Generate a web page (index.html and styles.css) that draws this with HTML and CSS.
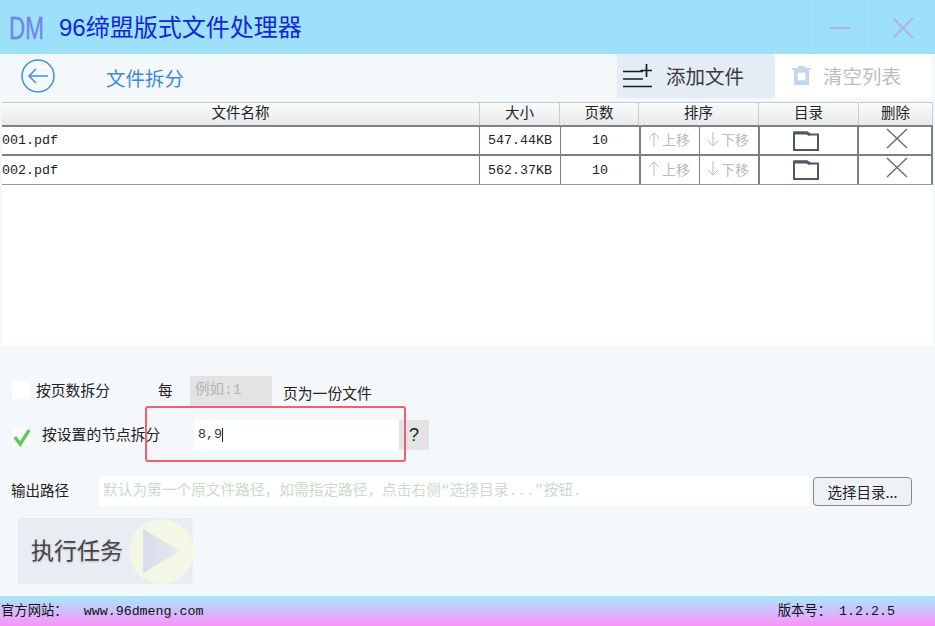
FILE: index.html
```html
<!DOCTYPE html>
<html lang="zh">
<head>
<meta charset="utf-8">
<title>96缔盟版式文件处理器</title>
<link rel="stylesheet" href="styles.css">
</head>
<body>
<div class="app">
  <header class="titlebar">
    <span class="logo">DM</span>
    <h1 class="apptitle">96缔盟版式文件处理器</h1>
    <div class="winbtns">
      <div class="winbtn"><svg width="22" height="22" viewBox="0 0 22 22"><path d="M1 11H21" class="winstroke"/></svg></div>
      <div class="winbtn"><svg width="22" height="22" viewBox="0 0 22 22"><path d="M1 1L21 21M21 1L1 21" class="winstroke"/></svg></div>
    </div>
  </header>

  <div class="toolbar">
    <svg class="back" width="34" height="34" viewBox="0 0 34 34"><circle cx="17" cy="17" r="16" class="backstroke"/><path d="M8 17H27M15 10L8 17L15 24" class="backstroke"/></svg>
    <span class="pagetitle">文件拆分</span>
    <div class="spacer"></div>
    <div class="toolbtn add">
      <svg width="32" height="26" viewBox="0 0 32 26"><path d="M1 8.500H21M1 16H21M1 23.500H30M24.500 1V14M18.500 7.500H30" class="addstroke"/></svg>
      <span>添加文件</span>
    </div>
    <div class="toolbtn clear">
      <svg width="19" height="19" viewBox="0 0 20 20"><path d="M0 2H20V4H18V20H2V4H0Z M6 7V15H14V7Z" fill="#c3d6ee" fill-rule="evenodd"/><path d="M6 0H14V2H6Z" fill="#c3d6ee"/></svg>
      <span>清空列表</span>
    </div>
  </div>

  <section class="tablewrap">
    <div class="thead">
      <div class="th">文件名称</div>
      <div class="th">大小</div>
      <div class="th">页数</div>
      <div class="th">排序</div>
      <div class="th">目录</div>
      <div class="th">删除</div>
    </div>
    <div class="row">
      <div class="td name">001.pdf</div>
      <div class="td">547.44KB</div>
      <div class="td">10</div>
      <div class="td move"><svg width="12" height="15" viewBox="0 0 12 15"><path d="M6 15V1M1 6L6 1L11 6" class="arrow"/></svg>上移</div>
      <div class="td move"><svg width="12" height="15" viewBox="0 0 12 15"><path d="M6 0V14M1 9L6 14L11 9" class="arrow"/></svg>下移</div>
      <div class="td icon folderc"><svg width="26" height="20" viewBox="0 0 26 20"><path d="M1 1.500H14L17 3.500H25V19H1Z" class="folder"/><path d="M1 2H14L17 4" class="foldertop"/></svg></div>
      <div class="td icon crossc"><svg width="22" height="21" viewBox="0 0 22 21"><path d="M1 1L21 20M21 1L1 20" class="cross"/></svg></div>
    </div>
    <div class="row">
      <div class="td name">002.pdf</div>
      <div class="td">562.37KB</div>
      <div class="td">10</div>
      <div class="td move"><svg width="12" height="15" viewBox="0 0 12 15"><path d="M6 15V1M1 6L6 1L11 6" class="arrow"/></svg>上移</div>
      <div class="td move"><svg width="12" height="15" viewBox="0 0 12 15"><path d="M6 0V14M1 9L6 14L11 9" class="arrow"/></svg>下移</div>
      <div class="td icon folderc"><svg width="26" height="20" viewBox="0 0 26 20"><path d="M1 1.500H14L17 3.500H25V19H1Z" class="folder"/><path d="M1 2H14L17 4" class="foldertop"/></svg></div>
      <div class="td icon crossc"><svg width="22" height="21" viewBox="0 0 22 21"><path d="M1 1L21 20M21 1L1 20" class="cross"/></svg></div>
    </div>
  </section>

  <section class="options">
    <div class="opt first">
      <span class="check"></span>
      <span class="lbl">按页数拆分</span>
      <span class="every">每</span>
      <div class="pageinput">例如:1</div>
      <span class="suffix">页为一份文件</span>
    </div>
    <div class="opt second">
      <span class="check checked"><svg width="20" height="20" viewBox="0 0 20 20"><path d="M2 10L8 18L18 2" class="tick"/></svg></span>
      <span class="lbl">按设置的节点拆分</span>
      <div class="nodeinput">8,9<i class="caret"></i></div>
      <div class="help">?</div>
      <div class="redbox"></div>
    </div>
    <div class="opt third">
      <span class="outlbl">输出路径</span>
      <div class="pathinput">默认为第一个原文件路径，如需指定路径，点击右侧“选择目录...”按钮.</div>
      <button class="choose" type="button">选择目录...</button>
    </div>
    <div class="run">
      <span class="runtext">执行任务</span>
      <div class="playcircle"><svg width="37" height="44" viewBox="0 0 37 44"><defs><linearGradient id="playfill" x1="0" y1="0" x2="1" y2="0"><stop offset="0" stop-color="#d8dcec"/><stop offset="1" stop-color="#e6eaea"/></linearGradient></defs><path d="M0 0L37 22L0 44Z" fill="url(#playfill)"/></svg></div>
    </div>
  </section>

  <footer class="footer">
    <span>官方网站：  www.96dmeng.com</span>
    <span class="version">版本号： 1.2.2.5</span>
  </footer>
</div>
</body>
</html>
```
FILE: styles.css
```css
* { box-sizing: border-box; }
html, body { margin: 0; padding: 0; }
body { width: 935px; height: 626px; overflow: hidden; font-family: "Liberation Sans", "Noto Sans CJK SC", sans-serif; }
.app { width: 935px; height: 626px; display: flex; flex-direction: column; background: #f4f8fa; }

.titlebar { height: 54px; flex: none; background: #9ce0fa; display: flex; align-items: center; padding-left: 9px; }
.logo { font-size: 32px; color: #6f86e6; width: 50px; transform: scaleX(.7); transform-origin: left; padding-top: 3px; -webkit-text-stroke: .4px #6f86e6; }
.apptitle { margin: 0; font-size: 24px; font-weight: 400; color: #1426d8; line-height: 54px; padding-top: 2px; }
.winbtns { margin-left: auto; display: flex; height: 54px; margin-right: 1px; }
.winbtn { width: 63px; display: flex; align-items: center; justify-content: center; border-left: 1px solid #98dbf6; padding-top: 2px; }
.winstroke { fill: none; stroke: #b4aeeb; stroke-width: 2; }

.toolbar { height: 48px; flex: none; display: flex; align-items: center; padding: 0 0 4px 21px; }
.back { flex: none; }
.backstroke { fill: none; stroke: #3f8fdc; stroke-width: 1.500; }
.pagetitle { margin-left: 51px; margin-top: 3px; font-size: 19.500px; color: #3c8cdc; }
.spacer { flex: 1; }
.toolbtn { height: 44px; align-self: flex-start; display: flex; align-items: center; font-size: 19.500px; padding-bottom: 1px; }
.toolbtn.add { width: 158px; background: #e4ecf6; color: #3a3a3a; padding-left: 5px; gap: 12px; }
.addstroke { fill: none; stroke: #1a1a1a; stroke-width: 1.700; }
.toolbtn.clear { width: 157px; margin-right: 3px; background: #fff; color: #bdbdbd; padding-left: 17px; gap: 12px; }

.tablewrap { height: 244px; flex: none; margin: 0 2px; background: #fff; }
.thead { display: grid; grid-template-columns: 478px 80px 79px 120px 100px 74px; height: 23px; background: linear-gradient(#fbfcfc, #e6e9ea); border-top: 1px solid #c4c8ca; }
.row { display: grid; grid-template-columns: 478px 81px 80px 59px 60px 99px 74px; height: 29px; border-top: 2px solid #808080; }
.row + .row { height: 31px; border-bottom: 1px solid #999; }
.th { font-size: 14.500px; line-height: 20px; text-align: center; color: #222; border-right: 1px solid #c8ccce; }
.td { display: flex; align-items: center; justify-content: center; font-family: "Liberation Mono", "Noto Sans CJK SC", monospace; font-size: 13.330px; color: #222; border-right: 2px solid #808080; }
.td:nth-child(1), .td:nth-child(2) { border-right-width: 1px; }
.td:nth-child(4) { border-right-width: 1px; }
.td.name { justify-content: flex-start; border-left: 0; }
.td.move { font-family: "Noto Sans CJK SC", sans-serif; color: #bcbcbc; font-size: 14px; gap: 2px; padding: 0 2px 3px 0; }
.folderc { padding-right: 5px; }
.crossc { padding: 0 0 5px 4px; }
.arrow { fill: none; stroke: #bcbcbc; stroke-width: 1; }
.folder { fill: #fff; stroke: #4f5863; stroke-width: 2; }
.foldertop { fill: none; stroke: #4f5863; stroke-width: 3; }
.cross { fill: none; stroke: #707070; stroke-width: 1.500; }

.options { flex: 1; position: relative; }
.opt { display: flex; align-items: center; position: relative; }
.check { width: 18px; height: 18px; background: #fff; flex: none; display: flex; align-items: center; justify-content: center; }
.lbl { font-size: 14.800px; color: #222; margin-top: -4px; }
.first { height: 30px; margin-top: 30px; padding-left: 12px; }
.first .check { margin-top: -2px; }
.first .lbl { margin-left: 6px; }
.every { margin-left: 48px; margin-top: -4px; font-size: 14.500px; color: #222; width: 32px; }
.pageinput { width: 82px; height: 30px; background: #e3e3e3; color: #b4b4b4; font-size: 14.500px; line-height: 28px; padding-left: 5px; font-family: "Liberation Mono", "Noto Sans CJK SC", monospace; }
.suffix { margin-left: 11px; margin-top: 3px; font-size: 14.800px; color: #222; }
.second { height: 30px; margin-top: 14px; padding-left: 13px; }
.second .check { margin-top: 4px; }
.checked { background: #fafcfd; }
.tick { fill: none; stroke: #5cc95c; stroke-width: 3.800; }
.second .lbl { margin-left: 11px; width: 130px; }
.nodeinput { margin-left: 22px; width: 205px; height: 30px; background: #fff; font-family: "Liberation Mono", monospace; font-size: 13.330px; color: #333; line-height: 30px; padding-left: 4px; display: flex; align-items: center; }
.caret { width: 1px; height: 14px; background: #222; }
.help { width: 30px; height: 30px; background: #e3e3e3; font-size: 18px; color: #222; text-align: center; line-height: 30px; }
.redbox { position: absolute; left: 145px; top: -14px; width: 261px; height: 56px; border: 2px solid #f0606e; border-radius: 3px; }
.third { height: 30px; margin-top: 26px; padding-left: 11px; }
.outlbl { font-size: 14.500px; color: #222; width: 88px; margin-top: -3px; }
.pathinput { width: 710px; height: 30px; background: #fff; color: #cbdacb; font-family: "Liberation Mono", "Noto Sans CJK SC", monospace; font-size: 14.700px; line-height: 31px; padding-left: 4px; white-space: nowrap; }
.choose { margin-left: 4px; width: 99px; height: 29px; padding: 0; background: #eef1f5; border: 1px solid #888; border-radius: 4px; font-family: "Noto Sans CJK SC", sans-serif; font-size: 14.500px; color: #222; }
.run { margin: 12px 0 0 18px; width: 175px; height: 66px; background: #e9ecf3; display: flex; align-items: center; overflow: hidden; }
.runtext { margin: -5px 0 0 13px; flex: none; white-space: nowrap; font-size: 23px; color: #444; text-shadow: 0 1px 2px #bbb; }
.playcircle { width: 65px; height: 65px; border-radius: 50%; background: #f2f7e6; margin-left: 6px; display: flex; align-items: center; padding-left: 14px; flex: none; }

.footer { height: 30px; flex: none; background: linear-gradient(#a6e9fd, #fb93fa); display: flex; align-items: center; padding: 0 40px 3px 1px; font-family: "Liberation Mono", "Noto Sans CJK SC", monospace; font-size: 13.330px; color: #111; white-space: pre; }
.version { margin-left: auto; }
```
